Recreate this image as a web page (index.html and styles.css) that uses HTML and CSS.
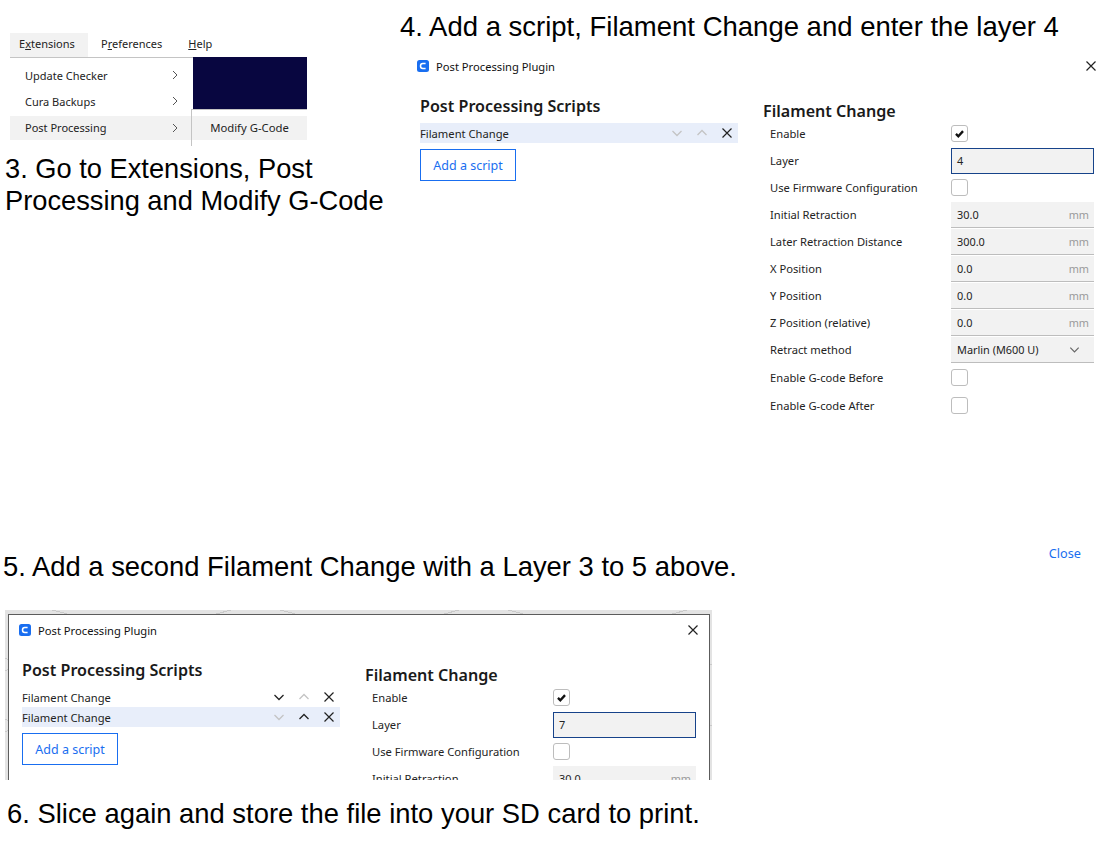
FILE: index.html
```html
<!DOCTYPE html>
<html lang="en">

<head>
    <meta charset="UTF-8">
    <title>Filament Change</title>
    <link rel="stylesheet" href="styles.css">
</head>

<body>
    <svg class="defs" width="0" height="0">
        <symbol id="down" viewBox="0 0 14 14"><path d="M2.5 5 7 9.5 11.5 5" fill="none" stroke="currentColor" stroke-width="1.3"/></symbol>
        <symbol id="up" viewBox="0 0 14 14"><path d="M2.5 9 7 4.5 11.5 9" fill="none" stroke="currentColor" stroke-width="1.3"/></symbol>
        <symbol id="cross" viewBox="0 0 14 14"><path d="M2.5 2.5 11.5 11.5M11.5 2.5 2.5 11.5" fill="none" stroke="currentColor" stroke-width="1.2"/></symbol>
        <symbol id="right" viewBox="0 0 14 14"><path d="M5 3 9 7 5 11" fill="none" stroke="currentColor" stroke-width="1"/></symbol>
        <symbol id="tick" viewBox="0 0 14 14"><path d="M2.5 7.5 5.5 10.5 11.5 4" fill="none" stroke="currentColor" stroke-width="3"/></symbol>
        <symbol id="logo" viewBox="0 0 12 12"><rect width="12" height="12" rx="2.5" fill="#196ef0"/><path d="M8.6 3.5H5.8Q3.5 3.5 3.5 6T5.8 8.5H8.6" fill="none" stroke="#fff" stroke-width="1.5"/></symbol>
    </svg>

    <div class="top">
        <div class="left">
            <div class="menu">
                <div class="menubar">
                    <span class="tab tab-on">E<u>x</u>tensions</span>
                    <span class="tab">P<u>r</u>eferences</span>
                    <span class="tab"><u>H</u>elp</span>
                </div>
                <div class="dropdown">
                    <div class="items">
                        <div class="item"><span>Update Checker</span><svg class="ico-r"><use href="#right"/></svg></div>
                        <div class="item"><span>Cura Backups</span><svg class="ico-r"><use href="#right"/></svg></div>
                        <div class="item item-on"><span>Post Processing</span><svg class="ico-r"><use href="#right"/></svg></div>
                    </div>
                    <div class="side">
                        <div class="navy"></div>
                        <div class="subitem">Modify G-Code</div>
                    </div>
                </div>
            </div>
            <h2 class="step step3">3. Go to Extensions, Post Processing and Modify G-Code</h2>
        </div>

        <div class="right">
            <h2 class="step step4">4. Add a script, Filament Change and enter the layer 4</h2>
            <div class="dialog">
                <div class="titlebar">
                    <svg class="logo"><use href="#logo"/></svg>
                    <span>Post Processing Plugin</span>
                    <svg class="close-x"><use href="#cross"/></svg>
                </div>
                <div class="panes">
                    <div class="scripts">
                        <h3>Post Processing Scripts</h3>
                        <div class="script script-on">
                            <span>Filament Change</span>
                            <svg class="off"><use href="#down"/></svg>
                            <svg class="off"><use href="#up"/></svg>
                            <svg><use href="#cross"/></svg>
                        </div>
                        <button class="add">Add a script</button>
                    </div>
                    <div class="settings">
                        <h3>Filament Change</h3>
                        <div class="row"><label>Enable</label><span class="check"><svg><use href="#tick"/></svg></span></div>
                        <div class="row"><label>Layer</label><span class="field field-on">4</span></div>
                        <div class="row"><label>Use Firmware Configuration</label><span class="check"></span></div>
                        <div class="row"><label>Initial Retraction</label><span class="field">30.0<em>mm</em></span></div>
                        <div class="row"><label>Later Retraction Distance</label><span class="field">300.0<em>mm</em></span></div>
                        <div class="row"><label>X Position</label><span class="field">0.0<em>mm</em></span></div>
                        <div class="row"><label>Y Position</label><span class="field">0.0<em>mm</em></span></div>
                        <div class="row"><label>Z Position (relative)</label><span class="field">0.0<em>mm</em></span></div>
                        <div class="row"><label>Retract method</label><span class="field">Marlin (M600 U)<svg class="select"><use href="#down"/></svg></span></div>
                        <div class="row row-tall"><label>Enable G-code Before</label><span class="check"></span></div>
                        <div class="row row-tall"><label>Enable G-code After</label><span class="check"></span></div>
                    </div>
                </div>
            </div>
        </div>
    </div>

    <div class="step5">
        <h2 class="step">5. Add a second Filament Change with a Layer 3 to 5 above.</h2>
        <a class="close">Close</a>
    </div>

    <div class="shot">
        <div class="window">
            <div class="titlebar">
                <svg class="logo"><use href="#logo"/></svg>
                <span>Post Processing Plugin</span>
                <svg class="close-x"><use href="#cross"/></svg>
            </div>
            <div class="panes">
                <div class="scripts">
                    <h3>Post Processing Scripts</h3>
                    <div class="script">
                        <span>Filament Change</span>
                        <svg><use href="#down"/></svg>
                        <svg class="off"><use href="#up"/></svg>
                        <svg><use href="#cross"/></svg>
                    </div>
                    <div class="script script-on">
                        <span>Filament Change</span>
                        <svg class="off"><use href="#down"/></svg>
                        <svg><use href="#up"/></svg>
                        <svg><use href="#cross"/></svg>
                    </div>
                    <button class="add">Add a script</button>
                </div>
                <div class="settings">
                    <h3>Filament Change</h3>
                    <div class="row"><label>Enable</label><span class="check"><svg><use href="#tick"/></svg></span></div>
                    <div class="row"><label>Layer</label><span class="field field-on">7</span></div>
                    <div class="row"><label>Use Firmware Configuration</label><span class="check"></span></div>
                    <div class="row"><label>Initial Retraction</label><span class="field">30.0<em>mm</em></span></div>
                </div>
            </div>
        </div>
    </div>

    <h2 class="step step6">6. Slice again and store the file into your SD card to print.</h2>
</body>

</html>
```

FILE: styles.css
```css
* {
    margin: 0;
    box-sizing: border-box;
}

body {
    background: white;
    color: #232323;
    font-family: "Noto Sans", sans-serif;
    font-size: 11.2px;
    overflow-x: hidden;
}

.defs {
    display: block;
    height: 0;
}

.step {
    color: black;
    font-family: "Liberation Sans", sans-serif;
    font-size: 27.4px;
    font-weight: normal;
    line-height: 32px;
}

.top {
    display: grid;
    grid-template-columns: 400px 703px;
    height: 544px;
}

/* menu screenshot */

.left {
    padding-top: 33px;
}

.menu {
    width: 297px;
    margin-left: 10px;
    font-size: 11px;
}

.menubar {
    display: flex;
    height: 24px;
    line-height: 22px;
}

.tab {
    padding: 0 13px 0 9px;
    width: 78px;
}

.tab + .tab {
    width: auto;
    padding: 0 13px;
}

.tab-on {
    background: #f2f2f2;
}

.dropdown {
    display: flex;
    height: 89px;
    border-top: 1px solid #c4c4c4;
}

.items {
    width: 181px;
    padding-top: 4px;
}

.item {
    display: flex;
    justify-content: space-between;
    align-items: center;
    height: 26px;
    padding: 0 9px 0 15px;
}

.item-on {
    background: #f2f2f2;
    height: 24px;
    margin-top: 2px;
    padding-bottom: 1px;
}

.ico-r {
    width: 14px;
    height: 14px;
    color: #555;
}

.side {
    width: 116px;
    margin-top: -1px;
}

.navy {
    width: 114px;
    height: 52px;
    margin-left: 2px;
    background: #080640;
}

.subitem {
    height: 37px;
    border-left: 1px solid #c4c4c4;
    border-top: 1px solid #c4c4c4;
    padding-top: 6px;
    background: linear-gradient(white 6px, #f2f2f2 6px, #f2f2f2 30px, white 30px);
    font-size: 11.3px;
    line-height: 24px;
    text-align: center;
}

.step3 {
    margin-left: 5px;
    margin-top: 7px;
    width: 390px;
    font-size: 27.25px;
}

/* dialogs */

.step4 {
    margin-top: 11px;
    font-size: 27.5px;
}

.dialog {
    width: 674px;
    margin-top: 13px;
    margin-left: 20px;
}

.titlebar {
    display: flex;
    align-items: center;
    height: 20px;
    margin-left: -3px;
    color: #111;
}

.logo {
    width: 12px;
    height: 12px;
    margin-right: 7px;
}

.close-x {
    width: 14px;
    height: 14px;
    margin-left: auto;
    margin-right: -4px;
    color: #222;
}

.panes {
    display: grid;
    grid-template-columns: 343px 331px;
    margin-top: 19px;
}

h3 {
    color: #1a1a1a;
    font-size: 16.1px;
    font-weight: 600;
    line-height: 22px;
}

.scripts h3 {
    margin-bottom: 6px;
}

.script {
    display: flex;
    align-items: center;
    gap: 11px;
    height: 20px;
    width: 318px;
    padding-right: 4px;
}

.script span {
    margin-right: auto;
}

.script svg {
    width: 14px;
    height: 14px;
    color: #222;
}

.script .off {
    color: #c4c4c4;
}

.script-on {
    background: #e8eefa;
}

.add {
    display: block;
    width: 96px;
    height: 32px;
    margin-top: 6px;
    background: white;
    border: 1px solid #196ef0;
    color: #196ef0;
    font: inherit;
    font-size: 12.5px;
}

.settings {
    padding-top: 5px;
}

.settings h3 {
    height: 20px;
}

.row {
    display: flex;
    align-items: center;
    height: 27px;
    padding-left: 7px;
}

.row-tall {
    height: 28px;
}

.row label {
    width: 181px;
}

.check {
    display: flex;
    align-items: center;
    justify-content: center;
    width: 17px;
    height: 17px;
    background: white;
    border: 1px solid #bdbdbd;
    border-radius: 3px;
}

.check svg {
    width: 11px;
    height: 11px;
    color: #111;
}

.field {
    display: flex;
    align-items: center;
    justify-content: space-between;
    width: 143px;
    height: 26px;
    padding: 0 5px 0 6px;
    background: #f2f2f2;
    border-bottom: 1px solid #bdbdbd;
    font-size: 10.9px;
}

.field-on {
    border: 1px solid #17438a;
    padding: 0 5px;
}

.field em {
    color: #9a9a9a;
    font-style: normal;
}

.select {
    width: 13px;
    height: 13px;
    margin-right: 8px;
    color: #666;
}

/* lower part */

.step5 {
    display: flex;
    justify-content: space-between;
    align-items: flex-start;
    padding: 0 22px 0 3px;
}

.step5 .step {
    margin-top: 7px;
}

.close {
    color: #196ef0;
    font-size: 12.7px;
    line-height: 18px;
}

.shot {
    width: 707px;
    height: 170px;
    margin: 27px 0 0 5px;
    padding: 4px 3px 0;
    overflow: hidden;
    background:
        repeating-linear-gradient(165deg, transparent 0 58px, #c9c9c9 58px 59px),
        repeating-linear-gradient(15deg, transparent 0 58px, #c9c9c9 58px 59px),
        #e3e3e3;
}

.window {
    width: 702px;
    height: 300px;
    padding: 5px 13px;
    background: white;
    border: 1px solid #5c5c5c;
}

.step6 {
    margin: 18px 0 0 7px;
}
```
